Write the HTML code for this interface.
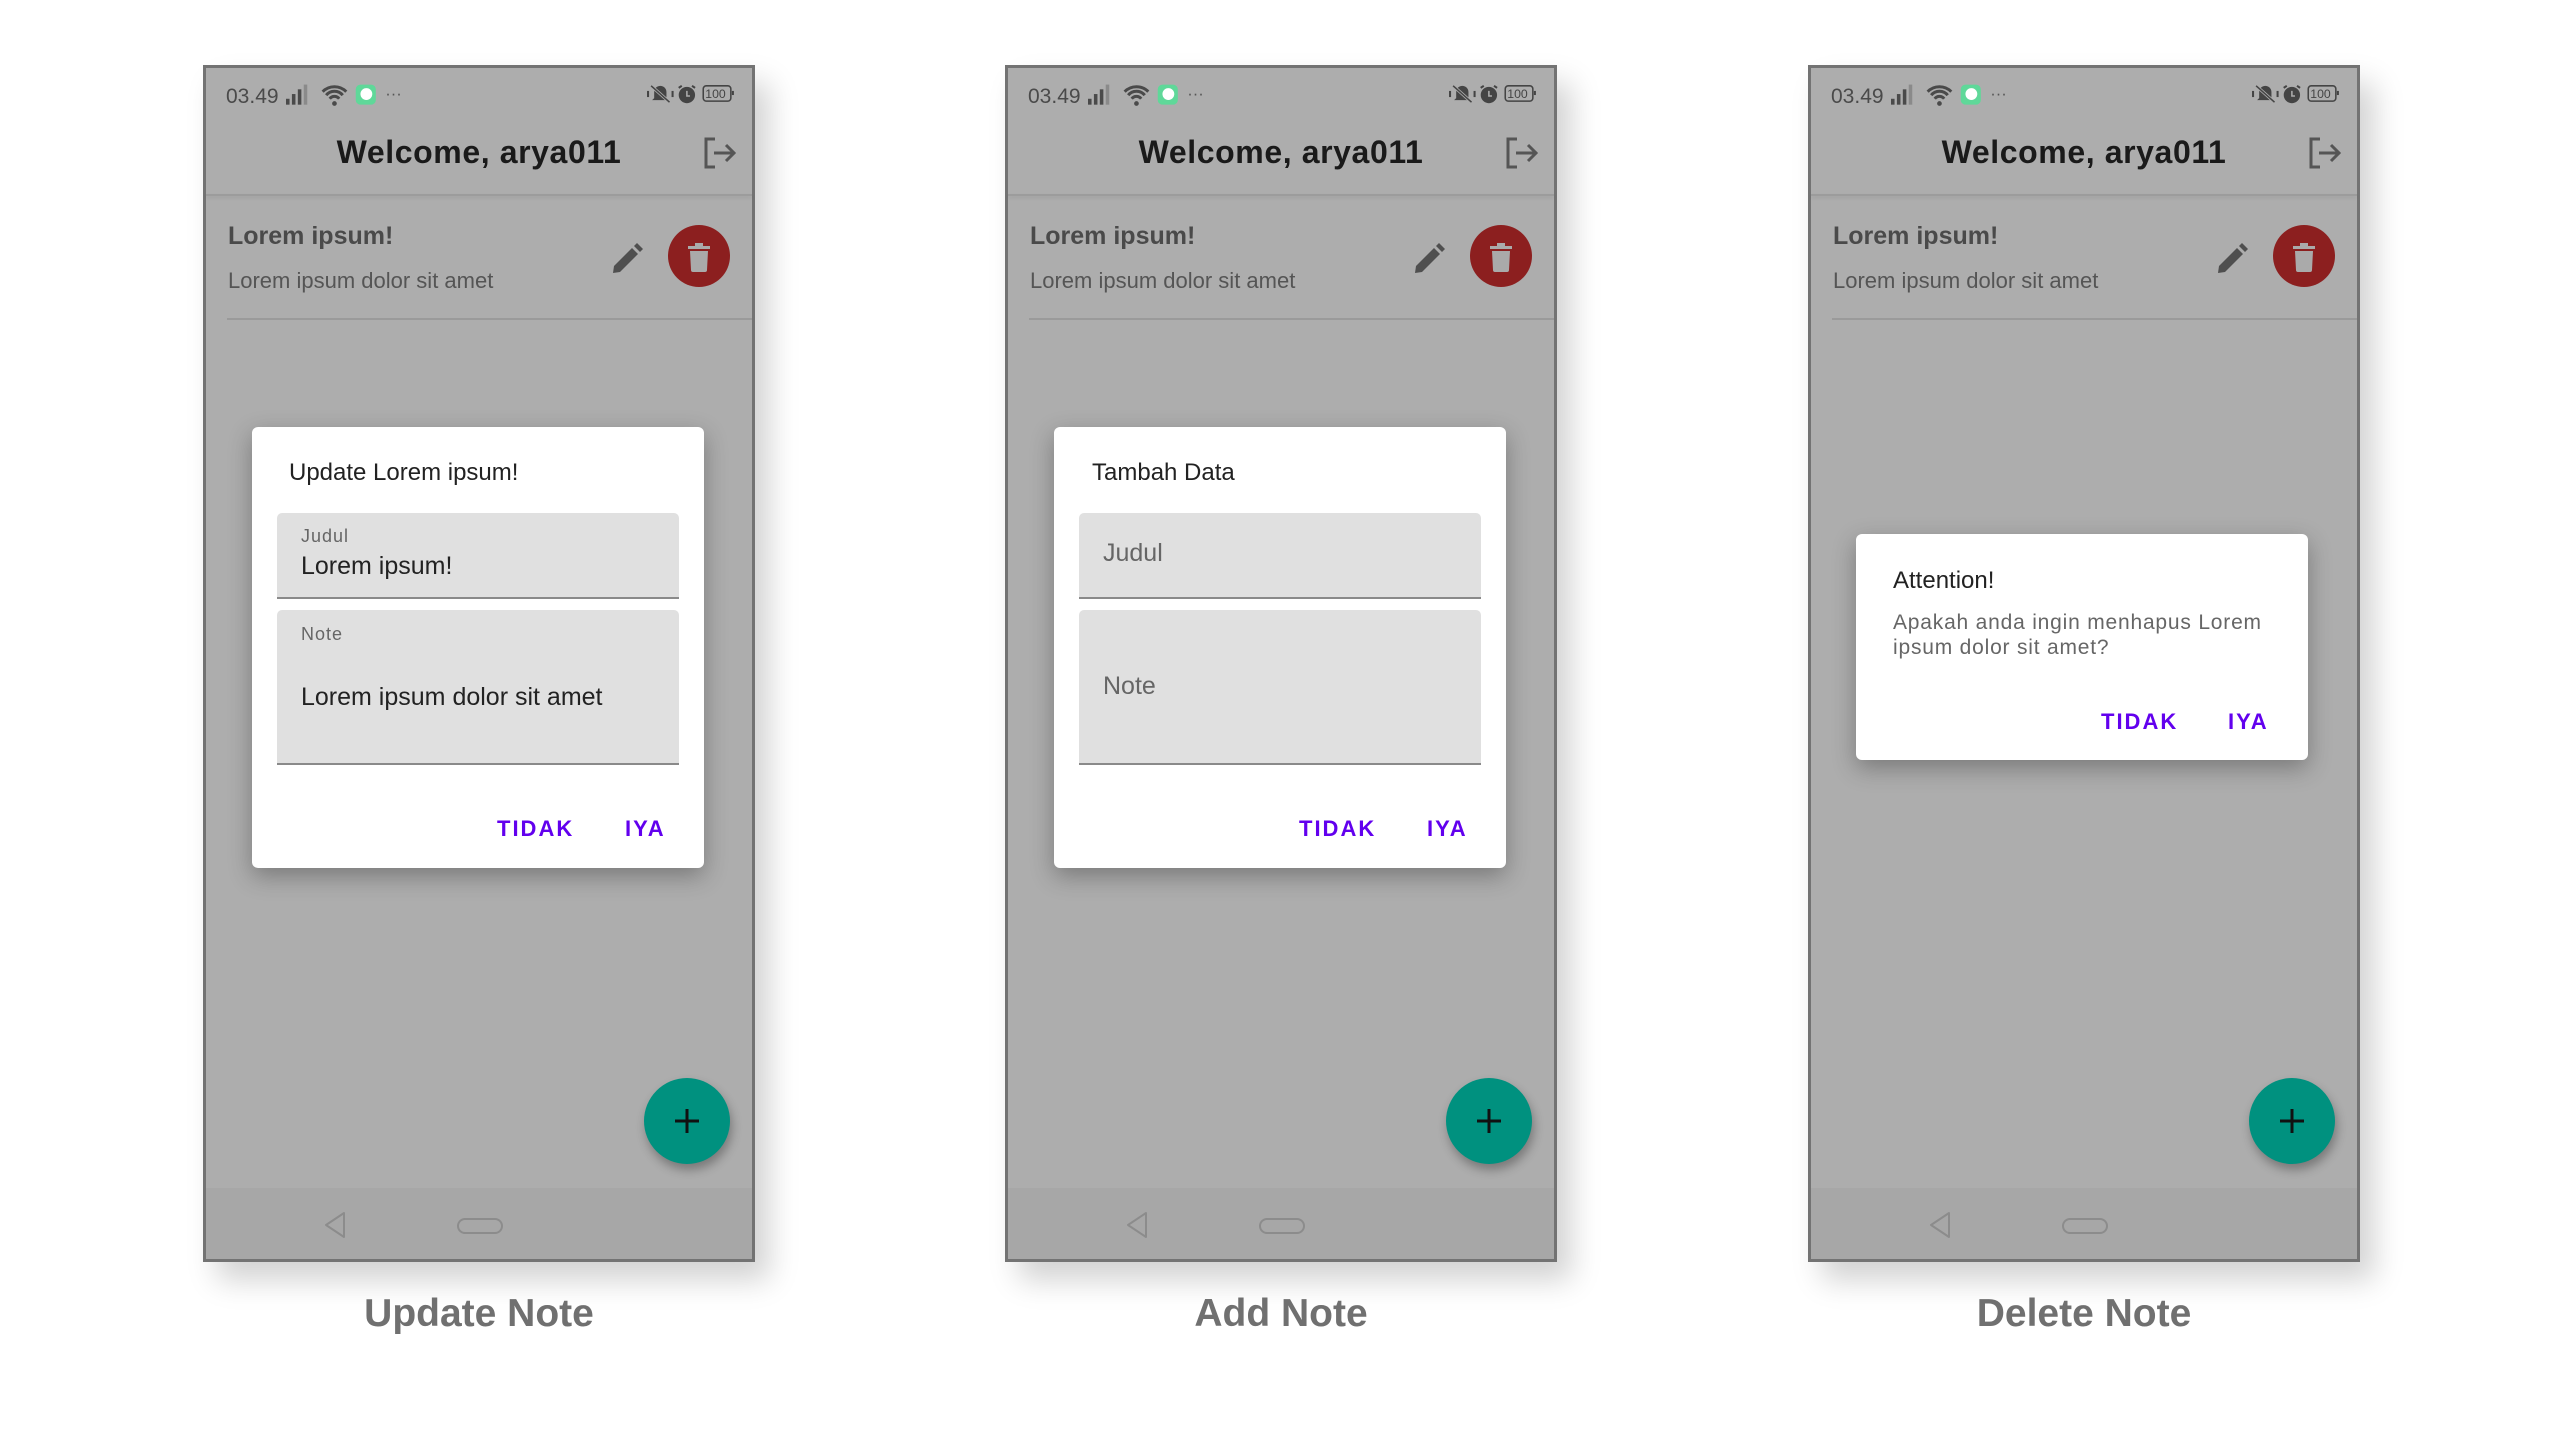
<!DOCTYPE html>
<html><head><meta charset="utf-8"><style>
*{margin:0;padding:0;box-sizing:border-box}
body{width:2560px;height:1440px;background:#fff;position:relative;overflow:hidden;font-family:"Liberation Sans",Roboto,sans-serif}
.ph{position:absolute;top:65px;width:552px;height:1197px;background:#adadad;border:3px solid #737373;box-shadow:14px 18px 28px rgba(0,0,0,0.18)}
.ph>*{position:absolute}
.time{left:20px;top:17px;font-size:21px;color:#4a4a4a}
.title{left:0;width:546px;text-align:center;top:66px;font-size:32px;font-weight:bold;color:#1a1a1a;letter-spacing:0.6px}
.hdiv{left:0;right:0;top:126px;height:2px;background:#9c9c9c;box-shadow:0 2px 3px rgba(0,0,0,0.08)}
.lt{left:22px;top:154px;font-size:25px;font-weight:bold;color:#4a4a4a}
.ls{left:22px;top:200px;font-size:22px;color:#555}
.ldiv{left:21px;right:0;top:250px;height:2px;background:#9a9a9a}
.red{left:462px;top:157px;width:62px;height:62px;border-radius:50%;background:#8c1f1f}
.fab{left:438px;top:1010px;width:86px;height:86px;border-radius:50%;background:#00917f;box-shadow:2px 6px 10px rgba(0,0,0,0.3)}
.nav{left:0;right:0;top:1120px;bottom:0;background:#a7a7a7}
.dlg{background:#fff;border-radius:6px;box-shadow:0 8px 24px rgba(0,0,0,0.3);position:absolute}
.dlg>*{position:absolute}
.dt{font-size:24px;color:#222}
.fld{left:25px;width:402px;background:#e0e0e0;border-radius:5px 5px 0 0;border-bottom:2px solid #8a8a8a}
.fld span{position:absolute;left:24px}
.lab{font-size:18px;color:#666;letter-spacing:1px}
.val{font-size:25px;color:#222}
.ph2{font-size:25px;color:#666}
.btn{font-size:22px;font-weight:bold;color:#6200ee;letter-spacing:2px}
.cap{position:absolute;top:1292px;width:552px;text-align:center;font-size:39px;font-weight:bold;color:#707070}
</style></head><body>

<div class="ph" style="left:203px">
 <div class="time">03.49</div>
 <svg style="left:80px;top:14px" width="130" height="30" viewBox="0 0 110 25"><g fill="#4a4a4a"><rect x="0" y="14" width="3" height="5"/><rect x="5" y="10" width="3" height="9"/><rect x="10" y="6" width="3" height="13"/><rect x="15" y="2" width="3" height="17" fill="#8a8a8a"/></g><path d="M31 8a14 14 0 0 1 20 0M34 11a9 9 0 0 1 14 0M37 14a5 5 0 0 1 8 0" stroke="#4a4a4a" stroke-width="2.5" fill="none"/><circle cx="41" cy="18" r="2" fill="#4a4a4a"/><rect x="59" y="2" width="17" height="17" rx="4" fill="#5fd899"/><circle cx="68" cy="10" r="5" fill="#fff"/><text x="84" y="14" font-size="14" fill="#555">···</text></svg>
 <svg style="left:440px;top:14px" width="92" height="24" viewBox="0 0 90 20"><path d="M8 14v-6a6 6 0 0 1 12 0v6l2 2H6z" fill="#444"/><path d="M5 2l18 16" stroke="#adadad" stroke-width="3"/><path d="M5 2l18 16" stroke="#444" stroke-width="1.5"/><rect x="1" y="7" width="2" height="6" fill="#444"/><rect x="25" y="7" width="2" height="6" fill="#444"/><circle cx="40" cy="11" r="8" fill="#444"/><path d="M40 7v5h3" stroke="#adadad" stroke-width="1.5" fill="none"/><path d="M32 4l3-2M48 4l-3-2" stroke="#444" stroke-width="2"/><rect x="56" y="2" width="27" height="15" rx="3" fill="none" stroke="#444" stroke-width="1.5"/><text x="58" y="14" font-size="12" fill="#444">100</text><rect x="84" y="7" width="2" height="4" fill="#444"/></svg>
 <div class="title">Welcome, arya011</div>
 <svg style="left:496px;top:69px" width="34" height="32"><path d="M13 2H4v28h9" stroke="#555" stroke-width="3" fill="none"/><path d="M12 16h19M24 8l8 8-8 8" stroke="#555" stroke-width="3" fill="none"/></svg>
 <div class="hdiv"></div>
 <div class="lt">Lorem ipsum!</div>
 <div class="ls">Lorem ipsum dolor sit amet</div>
 <svg style="left:405px;top:175px" width="32" height="32"><path d="M2 30l1-7L21 5l6 6L9 29z" fill="#4f4f4f"/><path d="M23 3l3-3 6 6-3 3z" fill="#4f4f4f"/></svg>
 <div class="red"></div>
 <svg style="left:482px;top:175px" width="24" height="30"><rect x="0" y="3" width="22" height="3" fill="#aaa"/><rect x="7" y="0" width="8" height="3" fill="#aaa"/><path d="M2 8h18l-1 19a2 2 0 0 1-2 2H5a2 2 0 0 1-2-2z" fill="#aaa"/></svg>
 <div class="ldiv"></div>
 <div class="nav"></div>
 <div class="fab"></div>
 <svg style="left:461px;top:1033px" width="40" height="40"><path d="M20 8v24M8 20h24" stroke="#111" stroke-width="3"/></svg>
 <svg style="left:115px;top:1142px" width="40" height="32"><path d="M23 3L5 15l18 12z" stroke="#8c8c8c" stroke-width="2" fill="none" stroke-linejoin="round"/></svg>
 <svg style="left:250px;top:1148px" width="50" height="20"><rect x="2" y="3" width="44" height="14" rx="7" fill="none" stroke="#8c8c8c" stroke-width="2"/></svg>
 <div class="dlg" style="left:46px;top:359px;width:452px;height:441px">
  <div class="dt" style="left:37px;top:32px">Update Lorem ipsum!</div>
  <div class="fld" style="top:86px;height:86px"><span class="lab" style="top:13px">Judul</span><span class="val" style="top:39px">Lorem ipsum!</span></div>
  <div class="fld" style="top:183px;height:155px"><span class="lab" style="top:14px">Note</span><span class="val" style="top:73px">Lorem ipsum dolor sit amet</span></div>
  <div class="btn" style="left:245px;top:389px">TIDAK</div>
  <div class="btn" style="left:373px;top:389px">IYA</div>
 </div>
</div>

<div class="ph" style="left:1005px">
 <div class="time">03.49</div>
 <svg style="left:80px;top:14px" width="130" height="30" viewBox="0 0 110 25"><g fill="#4a4a4a"><rect x="0" y="14" width="3" height="5"/><rect x="5" y="10" width="3" height="9"/><rect x="10" y="6" width="3" height="13"/><rect x="15" y="2" width="3" height="17" fill="#8a8a8a"/></g><path d="M31 8a14 14 0 0 1 20 0M34 11a9 9 0 0 1 14 0M37 14a5 5 0 0 1 8 0" stroke="#4a4a4a" stroke-width="2.5" fill="none"/><circle cx="41" cy="18" r="2" fill="#4a4a4a"/><rect x="59" y="2" width="17" height="17" rx="4" fill="#5fd899"/><circle cx="68" cy="10" r="5" fill="#fff"/><text x="84" y="14" font-size="14" fill="#555">···</text></svg>
 <svg style="left:440px;top:14px" width="92" height="24" viewBox="0 0 90 20"><path d="M8 14v-6a6 6 0 0 1 12 0v6l2 2H6z" fill="#444"/><path d="M5 2l18 16" stroke="#adadad" stroke-width="3"/><path d="M5 2l18 16" stroke="#444" stroke-width="1.5"/><rect x="1" y="7" width="2" height="6" fill="#444"/><rect x="25" y="7" width="2" height="6" fill="#444"/><circle cx="40" cy="11" r="8" fill="#444"/><path d="M40 7v5h3" stroke="#adadad" stroke-width="1.5" fill="none"/><path d="M32 4l3-2M48 4l-3-2" stroke="#444" stroke-width="2"/><rect x="56" y="2" width="27" height="15" rx="3" fill="none" stroke="#444" stroke-width="1.5"/><text x="58" y="14" font-size="12" fill="#444">100</text><rect x="84" y="7" width="2" height="4" fill="#444"/></svg>
 <div class="title">Welcome, arya011</div>
 <svg style="left:496px;top:69px" width="34" height="32"><path d="M13 2H4v28h9" stroke="#555" stroke-width="3" fill="none"/><path d="M12 16h19M24 8l8 8-8 8" stroke="#555" stroke-width="3" fill="none"/></svg>
 <div class="hdiv"></div>
 <div class="lt">Lorem ipsum!</div>
 <div class="ls">Lorem ipsum dolor sit amet</div>
 <svg style="left:405px;top:175px" width="32" height="32"><path d="M2 30l1-7L21 5l6 6L9 29z" fill="#4f4f4f"/><path d="M23 3l3-3 6 6-3 3z" fill="#4f4f4f"/></svg>
 <div class="red"></div>
 <svg style="left:482px;top:175px" width="24" height="30"><rect x="0" y="3" width="22" height="3" fill="#aaa"/><rect x="7" y="0" width="8" height="3" fill="#aaa"/><path d="M2 8h18l-1 19a2 2 0 0 1-2 2H5a2 2 0 0 1-2-2z" fill="#aaa"/></svg>
 <div class="ldiv"></div>
 <div class="nav"></div>
 <div class="fab"></div>
 <svg style="left:461px;top:1033px" width="40" height="40"><path d="M20 8v24M8 20h24" stroke="#111" stroke-width="3"/></svg>
 <svg style="left:115px;top:1142px" width="40" height="32"><path d="M23 3L5 15l18 12z" stroke="#8c8c8c" stroke-width="2" fill="none" stroke-linejoin="round"/></svg>
 <svg style="left:250px;top:1148px" width="50" height="20"><rect x="2" y="3" width="44" height="14" rx="7" fill="none" stroke="#8c8c8c" stroke-width="2"/></svg>
 <div class="dlg" style="left:46px;top:359px;width:452px;height:441px">
  <div class="dt" style="left:38px;top:32px">Tambah Data</div>
  <div class="fld" style="top:86px;height:86px"><span class="ph2" style="top:26px">Judul</span></div>
  <div class="fld" style="top:183px;height:155px"><span class="ph2" style="top:62px">Note</span></div>
  <div class="btn" style="left:245px;top:389px">TIDAK</div>
  <div class="btn" style="left:373px;top:389px">IYA</div>
 </div>
</div>

<div class="ph" style="left:1808px">
 <div class="time">03.49</div>
 <svg style="left:80px;top:14px" width="130" height="30" viewBox="0 0 110 25"><g fill="#4a4a4a"><rect x="0" y="14" width="3" height="5"/><rect x="5" y="10" width="3" height="9"/><rect x="10" y="6" width="3" height="13"/><rect x="15" y="2" width="3" height="17" fill="#8a8a8a"/></g><path d="M31 8a14 14 0 0 1 20 0M34 11a9 9 0 0 1 14 0M37 14a5 5 0 0 1 8 0" stroke="#4a4a4a" stroke-width="2.5" fill="none"/><circle cx="41" cy="18" r="2" fill="#4a4a4a"/><rect x="59" y="2" width="17" height="17" rx="4" fill="#5fd899"/><circle cx="68" cy="10" r="5" fill="#fff"/><text x="84" y="14" font-size="14" fill="#555">···</text></svg>
 <svg style="left:440px;top:14px" width="92" height="24" viewBox="0 0 90 20"><path d="M8 14v-6a6 6 0 0 1 12 0v6l2 2H6z" fill="#444"/><path d="M5 2l18 16" stroke="#adadad" stroke-width="3"/><path d="M5 2l18 16" stroke="#444" stroke-width="1.5"/><rect x="1" y="7" width="2" height="6" fill="#444"/><rect x="25" y="7" width="2" height="6" fill="#444"/><circle cx="40" cy="11" r="8" fill="#444"/><path d="M40 7v5h3" stroke="#adadad" stroke-width="1.5" fill="none"/><path d="M32 4l3-2M48 4l-3-2" stroke="#444" stroke-width="2"/><rect x="56" y="2" width="27" height="15" rx="3" fill="none" stroke="#444" stroke-width="1.5"/><text x="58" y="14" font-size="12" fill="#444">100</text><rect x="84" y="7" width="2" height="4" fill="#444"/></svg>
 <div class="title">Welcome, arya011</div>
 <svg style="left:496px;top:69px" width="34" height="32"><path d="M13 2H4v28h9" stroke="#555" stroke-width="3" fill="none"/><path d="M12 16h19M24 8l8 8-8 8" stroke="#555" stroke-width="3" fill="none"/></svg>
 <div class="hdiv"></div>
 <div class="lt">Lorem ipsum!</div>
 <div class="ls">Lorem ipsum dolor sit amet</div>
 <svg style="left:405px;top:175px" width="32" height="32"><path d="M2 30l1-7L21 5l6 6L9 29z" fill="#4f4f4f"/><path d="M23 3l3-3 6 6-3 3z" fill="#4f4f4f"/></svg>
 <div class="red"></div>
 <svg style="left:482px;top:175px" width="24" height="30"><rect x="0" y="3" width="22" height="3" fill="#aaa"/><rect x="7" y="0" width="8" height="3" fill="#aaa"/><path d="M2 8h18l-1 19a2 2 0 0 1-2 2H5a2 2 0 0 1-2-2z" fill="#aaa"/></svg>
 <div class="ldiv"></div>
 <div class="nav"></div>
 <div class="fab"></div>
 <svg style="left:461px;top:1033px" width="40" height="40"><path d="M20 8v24M8 20h24" stroke="#111" stroke-width="3"/></svg>
 <svg style="left:115px;top:1142px" width="40" height="32"><path d="M23 3L5 15l18 12z" stroke="#8c8c8c" stroke-width="2" fill="none" stroke-linejoin="round"/></svg>
 <svg style="left:250px;top:1148px" width="50" height="20"><rect x="2" y="3" width="44" height="14" rx="7" fill="none" stroke="#8c8c8c" stroke-width="2"/></svg>
 <div class="dlg" style="left:45px;top:466px;width:452px;height:226px">
  <div class="dt" style="left:37px;top:33px">Attention!</div>
  <div style="left:37px;top:76px;width:390px;font-size:21px;line-height:25px;color:#666;letter-spacing:0.8px">Apakah anda ingin menhapus Lorem ipsum dolor sit amet?</div>
  <div class="btn" style="left:245px;top:175px">TIDAK</div>
  <div class="btn" style="left:372px;top:175px">IYA</div>
 </div>
</div>

<div class="cap" style="left:203px">Update Note</div>
<div class="cap" style="left:1005px">Add Note</div>
<div class="cap" style="left:1808px">Delete Note</div>
</body></html>
